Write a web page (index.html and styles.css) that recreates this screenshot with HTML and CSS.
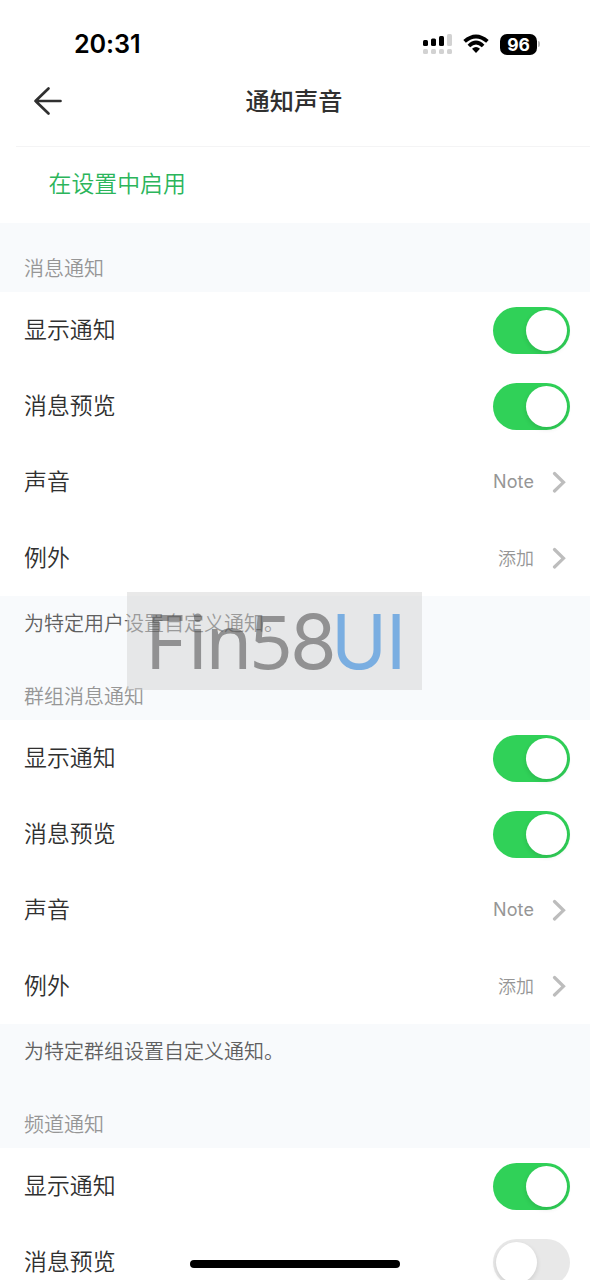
FILE: index.html
```html
<!DOCTYPE html>
<html lang="zh-CN">
<head>
<meta charset="utf-8">
<title>通知声音</title>
<link rel="stylesheet" href="styles.css">
</head>
<body>
<div class="screen">
  <header class="header">
    <div class="status">
      <span class="time">20:31</span>
      <div class="indicators">
        <svg class="signal" width="30" height="20" viewBox="0 0 30 20">
          <g fill="#000"><rect x="0" y="6" width="5" height="6" rx="1.5"/><rect x="8" y="4.5" width="5" height="7.5" rx="1.5"/><rect x="16" y="2" width="5" height="10" rx="1.5"/></g>
          <g fill="#d2d2d2"><rect x="24" y="0" width="5" height="12" rx="1.5"/><rect x="0" y="15" width="5" height="5" rx="1.5"/><rect x="8" y="15" width="5" height="5" rx="1.5"/><rect x="16" y="15" width="5" height="5" rx="1.5"/><rect x="24" y="15" width="5" height="5" rx="1.5"/></g>
        </svg>
        <svg class="wifi" width="26" height="20" viewBox="0 0 26 20">
          <g fill="none" stroke="#000" stroke-width="3.8"><path d="M1.6 7.4Q13-2.600 24.400 7.400"/><path d="M5.900 12Q13 5.200 20.100 12"/></g>
          <path d="M9 14.800Q13 11.300 17 14.800L13 19Z"/>
        </svg>
        <span class="battery">96</span><span class="cap"></span>
      </div>
    </div>
    <div class="nav">
      <svg class="back" width="30" height="30" viewBox="0 0 30 30"><path d="M15.5 2.5L2.5 15L15.5 27.500M2.500 15H27.500"/></svg>
      <h1 class="title">通知声音</h1>
    </div>
  </header>
  <div class="enable">在设置中启用</div>
  <div class="band first"><p class="label">消息通知</p></div>
  <div class="row"><span>显示通知</span><i class="switch on"></i></div>
  <div class="row"><span>消息预览</span><i class="switch on"></i></div>
  <div class="row"><span>声音</span><span class="value latin">Note</span><svg class="chevron" width="14" height="22" viewBox="0 0 14 22"><path d="M2.500 2.500L11.500 11.300L2.500 20"/></svg></div>
  <div class="row"><span>例外</span><span class="value">添加</span><svg class="chevron" width="14" height="22" viewBox="0 0 14 22"><path d="M2.500 2.500L11.500 11.300L2.500 20"/></svg></div>
  <div class="band">
    <p class="note">为特定用户设置自定义通知。</p><p class="label">群组消息通知</p>
    <svg class="watermark" width="295" height="98" viewBox="0 0 295 98">
      <rect width="295" height="98" fill="#d4d4d4" fill-opacity=".5"/>
      <text class="mark" y="76.500" x="18 61 78.500 122.500">Fin5</text>
      <text class="mark wide" y="76.500" x="163">8</text>
      <text class="mark wide blue" y="76.500" x="204 259">UI</text>
    </svg>
  </div>
  <div class="row"><span>显示通知</span><i class="switch on"></i></div>
  <div class="row"><span>消息预览</span><i class="switch on"></i></div>
  <div class="row"><span>声音</span><span class="value latin">Note</span><svg class="chevron" width="14" height="22" viewBox="0 0 14 22"><path d="M2.500 2.500L11.500 11.300L2.500 20"/></svg></div>
  <div class="row"><span>例外</span><span class="value">添加</span><svg class="chevron" width="14" height="22" viewBox="0 0 14 22"><path d="M2.500 2.500L11.500 11.300L2.500 20"/></svg></div>
  <div class="band"><p class="note">为特定群组设置自定义通知。</p><p class="label">频道通知</p></div>
  <div class="row"><span>显示通知</span><i class="switch on"></i></div>
  <div class="row"><span>消息预览</span><i class="switch"></i></div>
  <div class="home"></div>
</div>
</body>
</html>
```
FILE: styles.css
```css
* { box-sizing: border-box; }
body { margin: 0; background: #fff; font-family: "Noto Sans CJK SC", sans-serif; font-weight: 350; color: #303030; }
.screen { position: relative; width: 590px; height: 1280px; overflow: hidden; }
.header { height: 147px; }
.status { display: flex; align-items: center; justify-content: space-between; height: 72px; padding: 16px 50px 0 74px; }
.time { font: 600 25.2px/30px Inter, sans-serif; letter-spacing: -.1px; color: #000; }
.indicators { display: flex; align-items: center; }
.wifi { margin-left: 10px; }
.battery { width: 37px; height: 21px; margin-left: 11px; border-radius: 7px; background: #000; color: #fff; font: 700 17.5px/21px Inter, sans-serif; text-align: center; }
.cap { width: 2px; height: 6px; margin-left: 1px; border-radius: 0 2px 2px 0; background: #bbb; }
.nav { display: flex; align-items: center; height: 75px; margin-left: 16px; padding: 0 16px 17px; border-bottom: 1px solid #f4f4f5; }
.back { flex: none; margin-left: 1px; }
.back path { fill: none; stroke: #303030; stroke-width: 2.7; stroke-linecap: round; stroke-linejoin: round; }
.title { flex: 1; margin: -2px 49px 0 0; font-size: 24.2px; font-weight: 500; line-height: 36px; text-align: center; }
.enable { height: 76px; padding-left: 48.5px; font-size: 22.9px; line-height: 71px; color: #2bb55b; }
.band { position: relative; display: flex; flex-direction: column; justify-content: space-between; height: 124px; padding: 12px 24px 9px; background: #f8fafc; }
.band.first { height: 69px; justify-content: flex-end; }
.band p { margin: 0; font-size: 20px; line-height: 30px; }
.band .note { color: #606060; }
.band .label { color: #969696; }
.row { display: flex; align-items: center; height: 76px; padding: 0 20px 0 24px; font-size: 22.9px; line-height: 34px; }
.row > span:first-child { flex: 1; margin-top: -4px; }
.switch { width: 77px; height: 47px; margin-top: 1px; padding: 3px; border-radius: 24px; background: #e8e8e8; }
.switch::before { content: ""; display: block; width: 41px; height: 41px; border-radius: 50%; background: #fff; box-shadow: 0 2px 5px rgba(0,0,0,.12); }
.switch.on { background: #30d158; }
.switch.on::before { margin-left: 30px; }
.row .value { margin-top: -2px; font-size: 18px; color: #969696; }
.row .latin { margin-top: 0; font-family: Inter, sans-serif; font-weight: 400; letter-spacing: .1px; }
.chevron { margin: 0 4px 0 18px; }
.chevron path { fill: none; stroke: #bdbdbd; stroke-width: 3.2; stroke-linecap: round; }
.watermark { position: absolute; left: 127px; top: -4px; }
.mark { font: 400 75.500px "Noto Sans", sans-serif; fill: #3c3c3c; fill-opacity: .5; }
.mark.wide { font-family: Inter, sans-serif; }
.mark.blue { fill: #0e76da; }
.home { position: absolute; left: 190px; bottom: 12px; width: 210px; height: 8px; border-radius: 4px; background: #000; }
```
